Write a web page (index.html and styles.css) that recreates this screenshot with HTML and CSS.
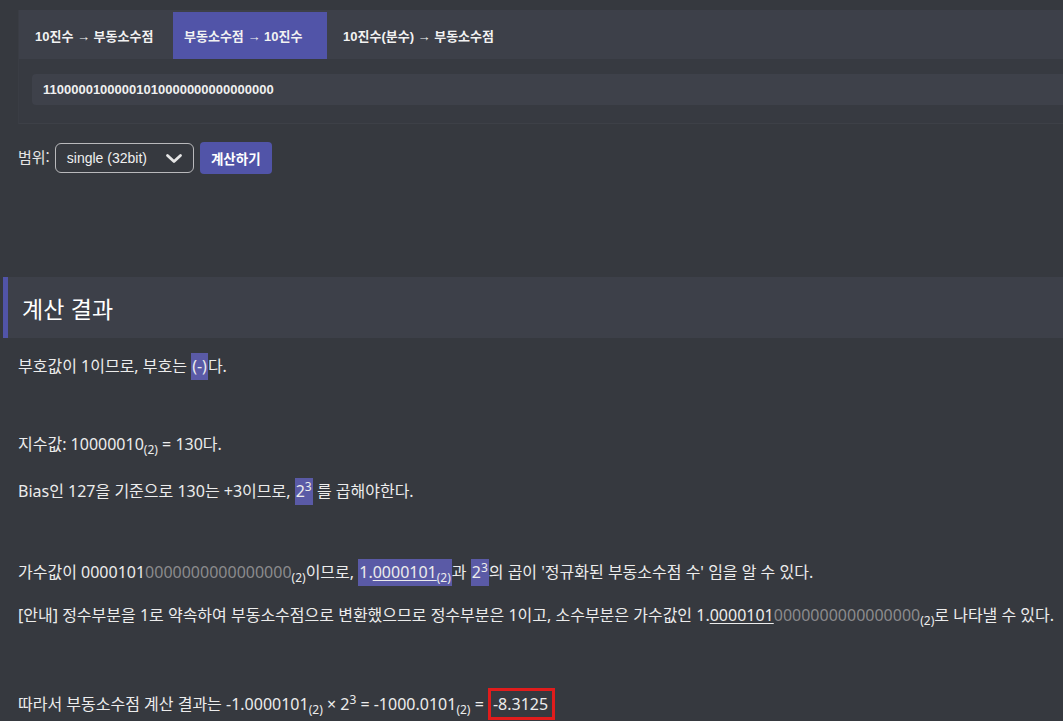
FILE: index.html
```html
<!DOCTYPE html>
<html lang="ko">
<head>
<meta charset="utf-8">
<title>부동소수점 계산기</title>
<link rel="stylesheet" href="styles.css">
</head>
<body>
<div class="panel">
  <div class="tabs">
    <div class="tab">10진수 → 부동소수점</div>
    <div class="tab active">부동소수점 → 10진수</div>
    <div class="tab">10진수(분수) → 부동소수점</div>
  </div>
  <div class="panel-body">
    <div class="input">11000001000001010000000000000000</div>
  </div>
</div>
<div class="range-row">
  <span class="range-label">범위:</span>
  <div class="select">
    <span>single (32bit)</span>
    <svg class="chev" width="18" height="11" viewBox="0 0 18 11"><path d="M2.5 2.5 L9 8.5 L15.5 2.5" fill="none" stroke="#e6e6e6" stroke-width="2.8" stroke-linecap="round" stroke-linejoin="round"/></svg>
  </div>
  <button class="calc">계산하기</button>
</div>

<h2 class="result-title">계산 결과</h2>

<div class="result">
  <p>부호값이 1이므로, 부호는 <span class="hl">(-)</span>다.</p>
  <p class="gap1">지수값: 10000010<sub>(2)</sub> = 130다.</p>
  <p>Bias인 127을 기준으로 130는 +3이므로, <span class="hl">2<sup>3</sup></span> 를 곱해야한다.</p>
  <p class="gap2">가수값이 0000101<span class="dim">0000000000000000</span><sub>(2)</sub>이므로, <span class="hl">1.<u>0000101</u><sub>(2)</sub></span>과 <span class="hl">2<sup>3</sup></span>의 곱이 '정규화된 부동소수점 수' 임을 알 수 있다.</p>
  <p>[안내] 정수부분을 1로 약속하여 부동소수점으로 변환했으므로 정수부분은 1이고, 소수부분은 가수값인 1.<u>0000101</u><span class="dim">0000000000000000</span><sub>(2)</sub>로 나타낼 수 있다.</p>
  <p class="gap3">따라서 부동소수점 계산 결과는 -1.0000101<sub>(2)</sub> × 2<sup>3</sup> = -1000.0101<sub>(2)</sub> = <span class="answer">-8.3125</span></p>
</div>
</body>
</html>
```
FILE: styles.css
```css
* { box-sizing: border-box; }
html, body { margin: 0; padding: 0; }
body {
  background: #36393f;
  color: #ececec;
  font-family: "Noto Sans", "Noto Sans CJK KR", sans-serif;
  overflow: hidden;
}
.panel {
  margin: 10px 0 0 18px;
  border-bottom: 1px solid #3d4047;
  border-left: 1px solid #3a3d44;
}
.tabs {
  display: flex;
  height: 49px;
  background: #3d4049;
  align-items: flex-end;
}
.tab {
  height: 47px;
  display: flex;
  align-items: center;
  padding: 0 16px;
  font-family: "Liberation Sans", "Noto Sans CJK KR", sans-serif;
  font-weight: bold;
  font-size: 13px;
  color: #f2f2f2;
  min-width: 154px;
}
.tab.active { background: #5154a8; padding: 0 11px; }
.panel-body {
  padding: 15px 0 18px 13px;
  background: #373a41;
}
.input {
  height: 31px;
  background: #3e414a;
  border-radius: 4px 0 0 4px;
  padding-left: 11px;
  display: flex;
  align-items: center;
  font-family: "Liberation Sans", sans-serif;
  font-weight: bold;
  font-size: 13px;
  color: #f0f0f0;
}
.range-row {
  display: flex;
  align-items: center;
  margin: 18px 0 0 18px;
  gap: 6px;
}
.range-label {
  font-family: "Noto Sans CJK KR", sans-serif;
  font-size: 15px;
  color: #e6e6e6;
  position: relative;
  top: -2px;
  margin-right: -1px;
}
.select {
  width: 139px;
  height: 30px;
  border: 1px solid #b9b9bc;
  border-radius: 6px;
  display: flex;
  align-items: center;
  justify-content: space-between;
  padding: 0 10px 0 11px;
  font-family: "Liberation Sans", sans-serif;
  font-size: 14px;
  color: #f0f0f0;
}
.calc {
  width: 72px;
  height: 32px;
  border: none;
  border-radius: 4px;
  background: #5154a8;
  color: #fff;
  font-family: "Noto Sans CJK KR", sans-serif;
  font-weight: bold;
  font-size: 13.5px;
  padding: 0;
}
.result-title {
  margin: 103px 0 0 3px;
  height: 61px;
  display: flex;
  align-items: center;
  background: #3d4049;
  border-left: 5px solid #5154a8;
  padding-left: 14px;
  font-family: "Noto Sans CJK KR", sans-serif;
  font-weight: normal;
  font-size: 23px;
  color: #ffffff;
}
.result { padding: 16px 0 0 18px; }
.result p {
  margin: 0 0 23px 0;
  font-size: 16px;
  line-height: 24px;
  white-space: nowrap;
}
.result p.gap1 { margin-top: 54px; }
.result p.gap2 { margin-top: 57px; margin-bottom: 19px; }
.result p.gap3 { margin-top: 61px; }
sub, sup { font-size: 12px; line-height: 0; }
.hl { background: #5a5aa6; padding: 2px 1px 3px; }
.dim { color: #8b8b8d; }
u { text-underline-offset: 2px; }
.answer {
  display: inline-block;
  border: 3px solid #e01c1c;
  padding: 0 4px 0 2px;
  line-height: 26px;
}
```
